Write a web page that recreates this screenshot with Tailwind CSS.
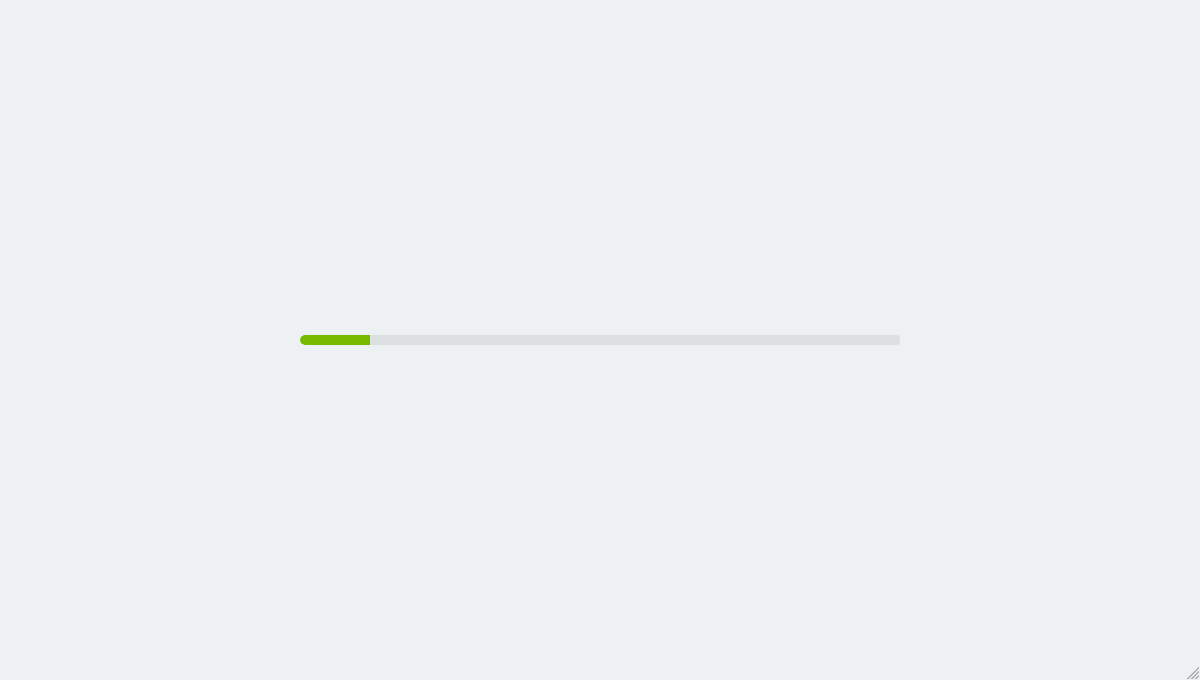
<!DOCTYPE html>
<html lang="en">
<head>
<meta charset="utf-8">
<meta name="viewport" content="width=device-width, initial-scale=1">
<title>Loading</title>
<script src="https://cdn.jsdelivr.net/npm/@tailwindcss/browser@4"></script>
</head>
<body class="bg-[#edf1f4]">
<main class="relative flex min-h-screen items-center justify-center">
  <div role="progressbar" aria-label="Loading" aria-valuemin="0" aria-valuemax="600" aria-valuenow="70" class="h-2.5 w-1/2 overflow-hidden rounded-l-[5px] rounded-r-[4px] bg-[#dbdfe1]">
    <div class="h-full rounded-l-[5px] bg-[#76b900]" style="width:11.667%"></div>
  </div>
  <!-- Window resize grip -->
  <svg class="absolute right-px bottom-px h-3 w-3 overflow-hidden" viewBox="0 0 12 12" fill="none" aria-hidden="true">
    <path d="M-1 13.5L13.5 -1M3 13.5L13.5 3M7 13.5L13.5 7" stroke="#9b9d9f" stroke-width="1.2"/>
  </svg>
</main>
</body>
</html>
